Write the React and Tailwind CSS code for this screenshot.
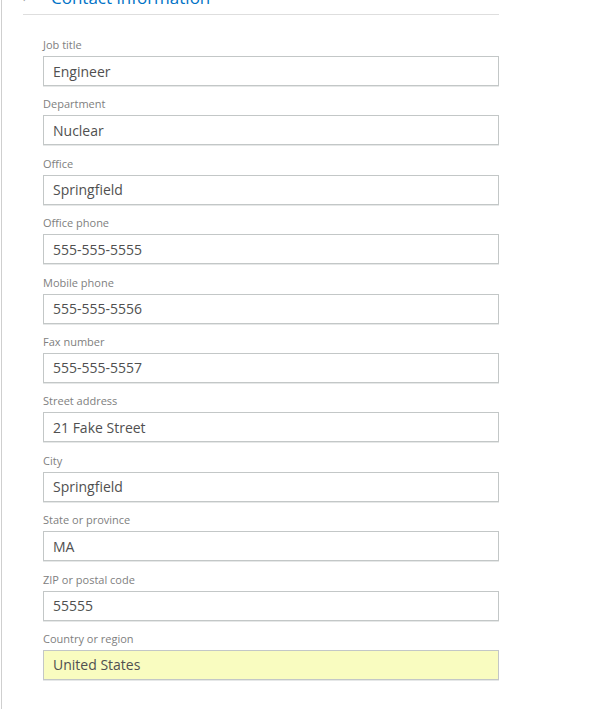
import React from 'react';

const FIELDS = [
  { label: 'Job title', value: 'Engineer' },
  { label: 'Department', value: 'Nuclear' },
  { label: 'Office', value: 'Springfield' },
  { label: 'Office phone', value: '555-555-5555' },
  { label: 'Mobile phone', value: '555-555-5556' },
  { label: 'Fax number', value: '555-555-5557' },
  { label: 'Street address', value: '21 Fake Street' },
  { label: 'City', value: 'Springfield' },
  { label: 'State or province', value: 'MA' },
  { label: 'ZIP or postal code', value: '55555' },
  { label: 'Country or region', value: 'United States', highlight: true },
];

const Field = ({ label, value, highlight }) => (
  <div className="h-[59.4px]">
    <label className="block h-[20px] pt-[1px] text-[11px] leading-[16px] text-[#808080]">{label}</label>
    <input
      type="text"
      readOnly
      defaultValue={value}
      className={`block w-[456px] h-[30px] px-[9px] border border-[#c3c7c7] shadow-[0_1px_0_#e6e8e8] text-[14px] text-[#505050] outline-none font-['Open_Sans',sans-serif] ${
        highlight ? 'bg-[#f9fcc0]' : 'bg-white'
      }`}
    />
  </div>
);

export default function App() {
  return (
    <div className="w-[594px] h-[709px] overflow-hidden bg-white font-['Open_Sans',sans-serif] pl-[1px]">
      <div className="h-full border-l border-[#cfcfcf] overflow-hidden">
        {/* Section header, scrolled partly out of view */}
        <div className="ml-[21px] w-[476px] -mt-[16px] h-[31px] border-b border-[#dedede] flex items-start pt-[4px]">
          <span className="w-[28px] text-[#9a9a9a] text-[12px] leading-[20px]">›</span>
          <span className="text-[#0072c6] text-[17px] leading-[20px]">Contact information</span>
        </div>

        {/* Fields */}
        <div className="ml-[41px] mt-[21px]">
          {FIELDS.map((f) => (
            <Field key={f.label} {...f} />
          ))}
        </div>
      </div>
    </div>
  );
}
